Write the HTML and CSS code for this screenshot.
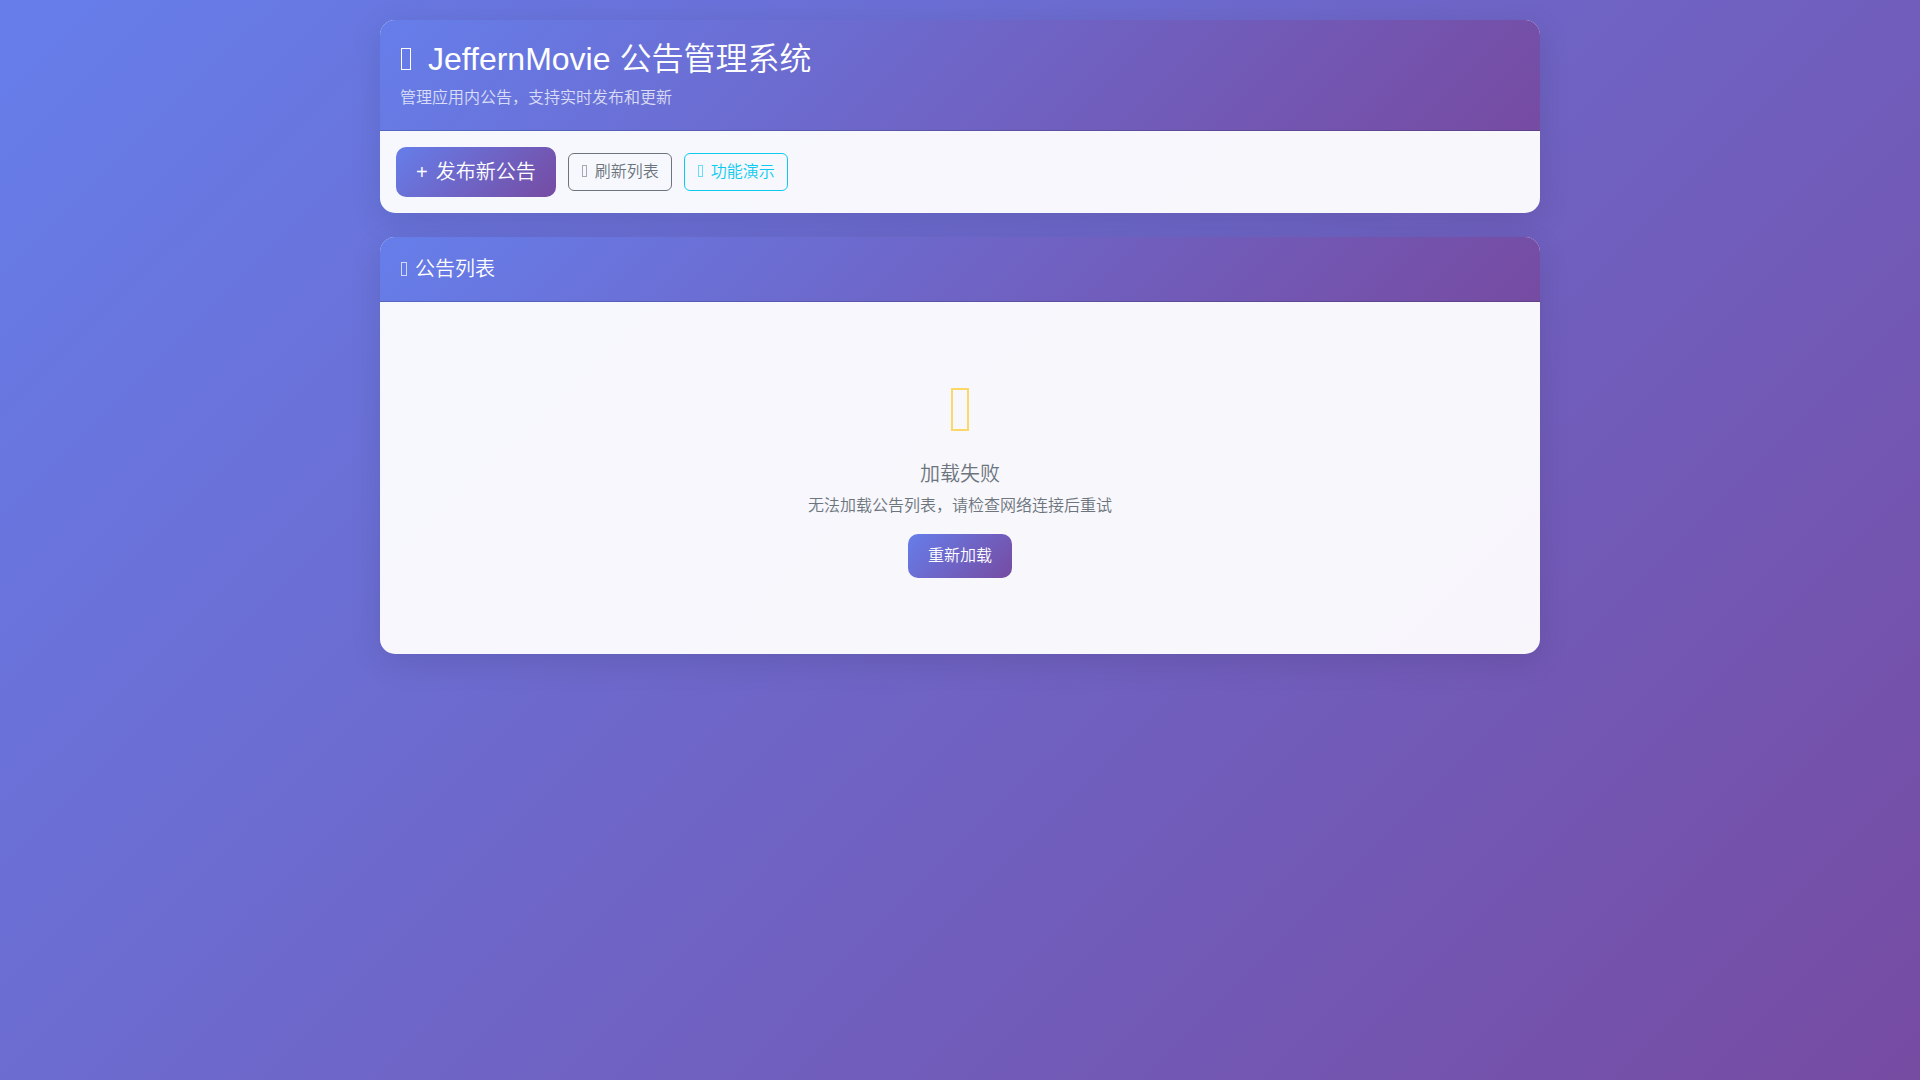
FILE: index.html
```html
<!DOCTYPE html>
<html lang="zh-CN">
<head>
  <meta charset="UTF-8">
  <meta name="viewport" content="width=device-width, initial-scale=1.0">
  <title>JeffernMovie 公告管理系统</title>
  <link rel="stylesheet" href="styles.css">
</head>
<body>

  <main class="main-container">
    <section class="card">
      <header class="card-header">
        <h1 class="page-title"><i class="icon icon-lg"></i> JeffernMovie 公告管理系统</h1>
        <p class="subtitle">管理应用内公告，支持实时发布和更新</p>
      </header>
      <div class="card-body toolbar">
        <button type="button" class="btn btn-primary btn-lg"><i class="icon-plus">+</i>发布新公告</button>
        <button type="button" class="btn btn-outline-secondary"><i class="icon icon-sm"></i>刷新列表</button>
        <button type="button" class="btn btn-outline-info"><i class="icon icon-sm"></i>功能演示</button>
      </div>
    </section>

    <section class="card">
      <header class="card-header">
        <h2 class="section-title"><i class="icon icon-md"></i>公告列表</h2>
      </header>
      <div class="card-body">
        <div class="empty-state">
          <i class="icon icon-warning"></i>
          <h3 class="empty-title">加载失败</h3>
          <p class="empty-text">无法加载公告列表，请检查网络连接后重试</p>
          <button type="button" class="btn btn-primary">重新加载</button>
        </div>
      </div>
    </section>
  </main>

</body>
</html>
```

FILE: styles.css
```css
* {
  box-sizing: border-box;
}

body {
  margin: 0;
  min-height: 100vh;
  background: linear-gradient(135deg, #667eea 0%, #764ba2 100%);
  color: #212529;
  font-family: "Liberation Sans", "Noto Sans CJK SC", sans-serif;
  font-size: 16px;
  font-weight: 350;
  line-height: 1.5;
}

h1, h2, h3, p {
  margin: 0;
  font-weight: inherit;
}

.main-container {
  max-width: 1200px;
  margin: 0 auto;
  padding: 20px;
}

.card {
  margin-bottom: 24px;
  background: rgba(255, 255, 255, 0.95);
  border-radius: 15px;
  box-shadow: 0 8px 32px rgba(0, 0, 0, 0.1);
}

.card-header {
  padding: 20px;
  background: linear-gradient(135deg, #667eea 0%, #764ba2 100%);
  border-bottom: 1px solid rgba(0, 0, 0, 0.176);
  border-radius: 15px 15px 0 0;
  color: #fff;
}

.card-body {
  padding: 16px;
}

.page-title {
  margin-bottom: 8px;
  font-size: 32px;
  line-height: 38px;
}

.subtitle {
  opacity: 0.75;
}

.section-title {
  font-size: 20px;
  line-height: 24px;
}

.toolbar {
  display: flex;
  flex-wrap: wrap;
  align-items: center;
  gap: 12px;
}

/* buttons */
.btn {
  padding: 6px 12px;
  border: 1px solid transparent;
  border-radius: 6px;
  background: transparent;
  font-family: inherit;
  font-size: 16px;
  font-weight: inherit;
  line-height: 24px;
  cursor: pointer;
}

.btn-primary {
  padding: 10px 20px;
  border: none;
  border-radius: 10px;
  background: linear-gradient(135deg, #667eea 0%, #764ba2 100%);
  color: #fff;
}

.btn-lg {
  font-size: 20px;
  line-height: 30px;
}

.btn-outline-secondary {
  border-color: #6c757d;
  color: #6c757d;
}

.btn-outline-info {
  border-color: #0dcaf0;
  color: #0dcaf0;
}

/* icons */
.icon {
  display: inline-block;
  margin: 0 8px 0 1px;
  border: 1px solid currentColor;
}

.icon-sm {
  width: 5px;
  height: 12px;
  opacity: 0.6;
}

.icon-md {
  width: 6px;
  height: 14px;
  opacity: 0.7;
}

.icon-lg {
  width: 10px;
  height: 22px;
}

.icon-plus {
  margin-right: 8px;
  font-style: normal;
  line-height: 1;
}

.icon-warning {
  width: 18px;
  height: 43px;
  margin: 10px 0 31px;
  border-width: 2px;
  color: #ffc107;
  opacity: 0.6;
}

/* empty state */
.empty-state {
  display: flex;
  flex-direction: column;
  align-items: center;
  padding: 60px 20px;
  color: #6c757d;
  text-align: center;
}

.empty-title {
  margin-bottom: 8px;
  font-size: 20px;
  line-height: 24px;
}

.empty-text {
  margin-bottom: 16px;
}
```
